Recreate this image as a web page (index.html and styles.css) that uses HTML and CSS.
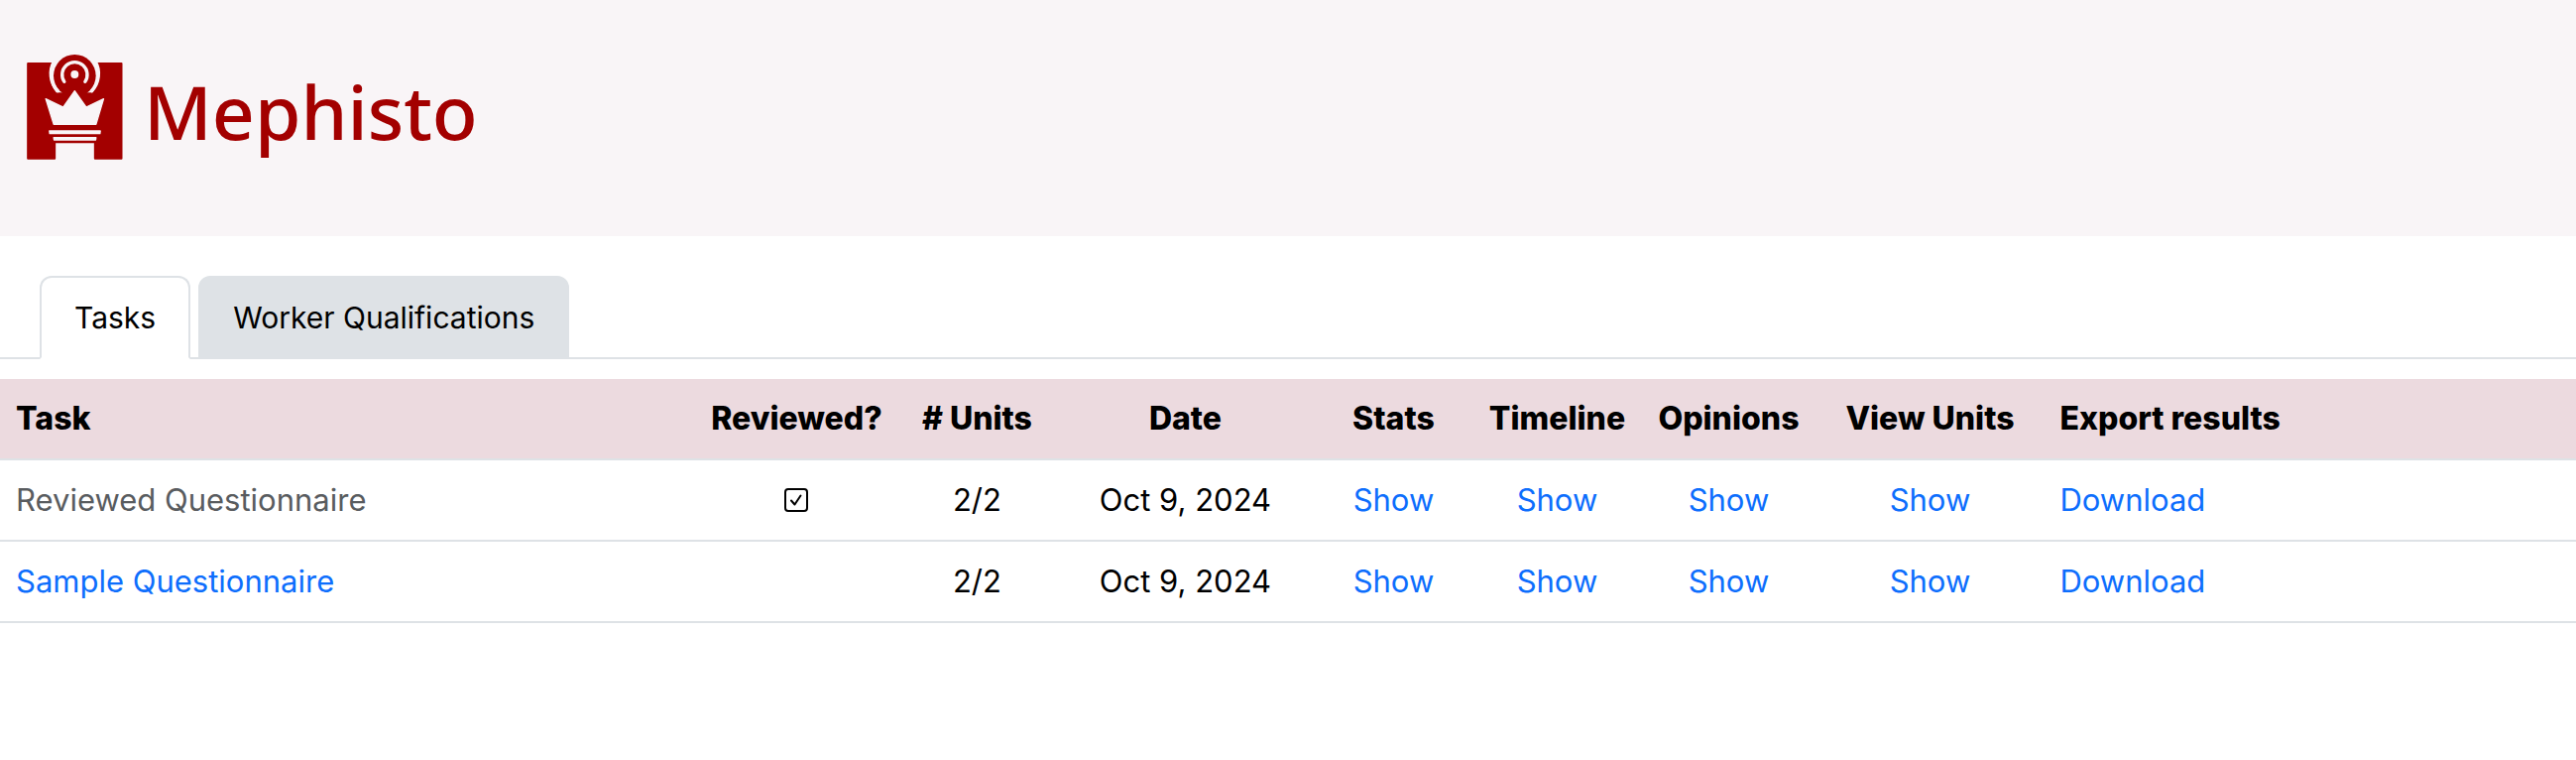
FILE: index.html
```html
<!DOCTYPE html>
<html lang="en">
<head>
<meta charset="utf-8">
<meta name="viewport" content="width=device-width, initial-scale=1">
<title>Mephisto</title>
<link rel="stylesheet" href="styles.css">
</head>
<body>
<header class="header">
  <a class="brand" href="#">
    <svg class="brand-logo" viewBox="82 75 290 318" aria-hidden="true">
      <path fill="#a30000" d="M85 99H160C148 122 146 160 171 190H281C306 160 304 122 292 99H368Q371 99 371 102V389Q371 392 368 392H288Q285 392 285 389V343H169V389Q169 392 166 392H85Q82 392 82 389V102Q82 99 85 99Z"/>
      <circle cx="226.500" cy="139" r="64" fill="#a30000"/>
      <g fill="none" stroke="#f9f5f7" stroke-width="10" stroke-linecap="round">
        <path d="M175 185C151 160 149 123 163 98"/>
        <path d="M278 185C302 160 304 123 290 98"/>
        <path d="M195 157A38 38 0 1 1 258 157"/>
      </g>
      <circle cx="226.500" cy="135" r="12" fill="#f9f5f7"/>
      <g fill="#f9f5f7" stroke="#f9f5f7" stroke-width="4" stroke-linejoin="round">
        <path d="M139 209L192 234L226.500 185L261 234L314 209L291 286H163Z"/>
        <path d="M150 306H304L303 314H151Z"/>
        <path d="M163 326H291L290 333H164Z"/>
      </g>
    </svg>
    <span class="brand-name">Mephisto</span>
  </a>
</header>
<nav class="tabs" role="tablist">
  <button class="tab tab-active" type="button" role="tab" aria-selected="true">Tasks</button>
  <button class="tab" type="button" role="tab" aria-selected="false">Worker Qualifications</button>
</nav>
<main>
  <table class="tasks">
    <thead>
      <tr>
        <th class="col-task" scope="col">Task</th>
        <th class="col-reviewed" scope="col">Reviewed?</th>
        <th class="col-units" scope="col"># Units</th>
        <th class="col-date" scope="col">Date</th>
        <th class="col-stats" scope="col">Stats</th>
        <th class="col-timeline" scope="col">Timeline</th>
        <th class="col-opinions" scope="col">Opinions</th>
        <th class="col-view" scope="col">View Units</th>
        <th class="col-export" scope="col">Export results</th>
      </tr>
    </thead>
    <tbody>
      <tr>
        <td class="col-task muted">Reviewed Questionnaire</td>
        <td><svg class="check" viewBox="0 0 24 24" role="img" aria-label="Reviewed"><rect x="1" y="1" width="22" height="22" rx="3"/><path d="M7 12.500L10.500 16.500L16.500 7.500"/></svg></td>
        <td>2/2</td>
        <td>Oct 9, 2024</td>
        <td><a href="#">Show</a></td>
        <td><a href="#">Show</a></td>
        <td><a href="#">Show</a></td>
        <td><a href="#">Show</a></td>
        <td class="col-export"><a href="#">Download</a></td>
      </tr>
      <tr>
        <td class="col-task"><a href="#">Sample Questionnaire</a></td>
        <td></td>
        <td>2/2</td>
        <td>Oct 9, 2024</td>
        <td><a href="#">Show</a></td>
        <td><a href="#">Show</a></td>
        <td><a href="#">Show</a></td>
        <td><a href="#">Show</a></td>
        <td class="col-export"><a href="#">Download</a></td>
      </tr>
    </tbody>
  </table>
</main>
</body>
</html>
```
FILE: styles.css
```css
* {
  box-sizing: border-box;
}

body {
  margin: 0;
  background: #fff;
  color: #000;
  font: 31px/48px Inter, "Liberation Sans", sans-serif;
}

a {
  color: #0d6efd;
  text-decoration: none;
}

.header {
  padding: 55px 27px 69px;
  background: #f9f5f7;
}

.brand {
  display: inline-flex;
  gap: 21px;
  vertical-align: top;
  color: #a30000;
}

.brand-logo {
  width: 97px;
  height: 106px;
}

.brand-name {
  font: 500 75px/114px "Noto Sans", sans-serif;
}

.tabs {
  display: flex;
  gap: 8px;
  padding: 40px 40px 0;
  border-bottom: 2px solid #dee2e6;
}

.tab {
  margin: 0 0 -2px;
  padding: 16px 33px;
  border: 2px solid #dee2e6;
  border-radius: 12px 12px 0 0;
  background: #dee2e6;
  color: #000;
  font: inherit;
  font-size: 30px;
  cursor: pointer;
}

.tab-active {
  border-bottom-color: #fff;
  background: #fff;
}

.tasks {
  width: 100%;
  margin-top: 20px;
  border-collapse: separate;
  border-spacing: 0;
  table-layout: fixed;
}

.tasks th,
.tasks td {
  padding: 16px;
  border-bottom: 2px solid #dee2e6;
  text-align: center;
  white-space: nowrap;
}

.tasks th {
  padding-right: 0;
  padding-left: 0;
  background: #ecdadf;
  font-size: 32px;
  font-weight: 800;
}

.tasks .col-task,
.tasks .col-export {
  padding-left: 16px;
  text-align: left;
}

.col-task { width: 27%; }
.col-reviewed { width: 204px; }
.col-units { width: 160px; }
.col-date { width: 260px; }
.col-stats { width: 160px; }
.col-timeline { width: 170px; }
.col-opinions { width: 176px; }
.col-view { width: 230px; }

.muted {
  color: #595c5f;
}

.check {
  display: block;
  width: 24px;
  height: 24px;
  margin: 0 auto;
  fill: none;
  stroke: #000;
  stroke-width: 2;
  stroke-linecap: round;
  stroke-linejoin: round;
}
```
